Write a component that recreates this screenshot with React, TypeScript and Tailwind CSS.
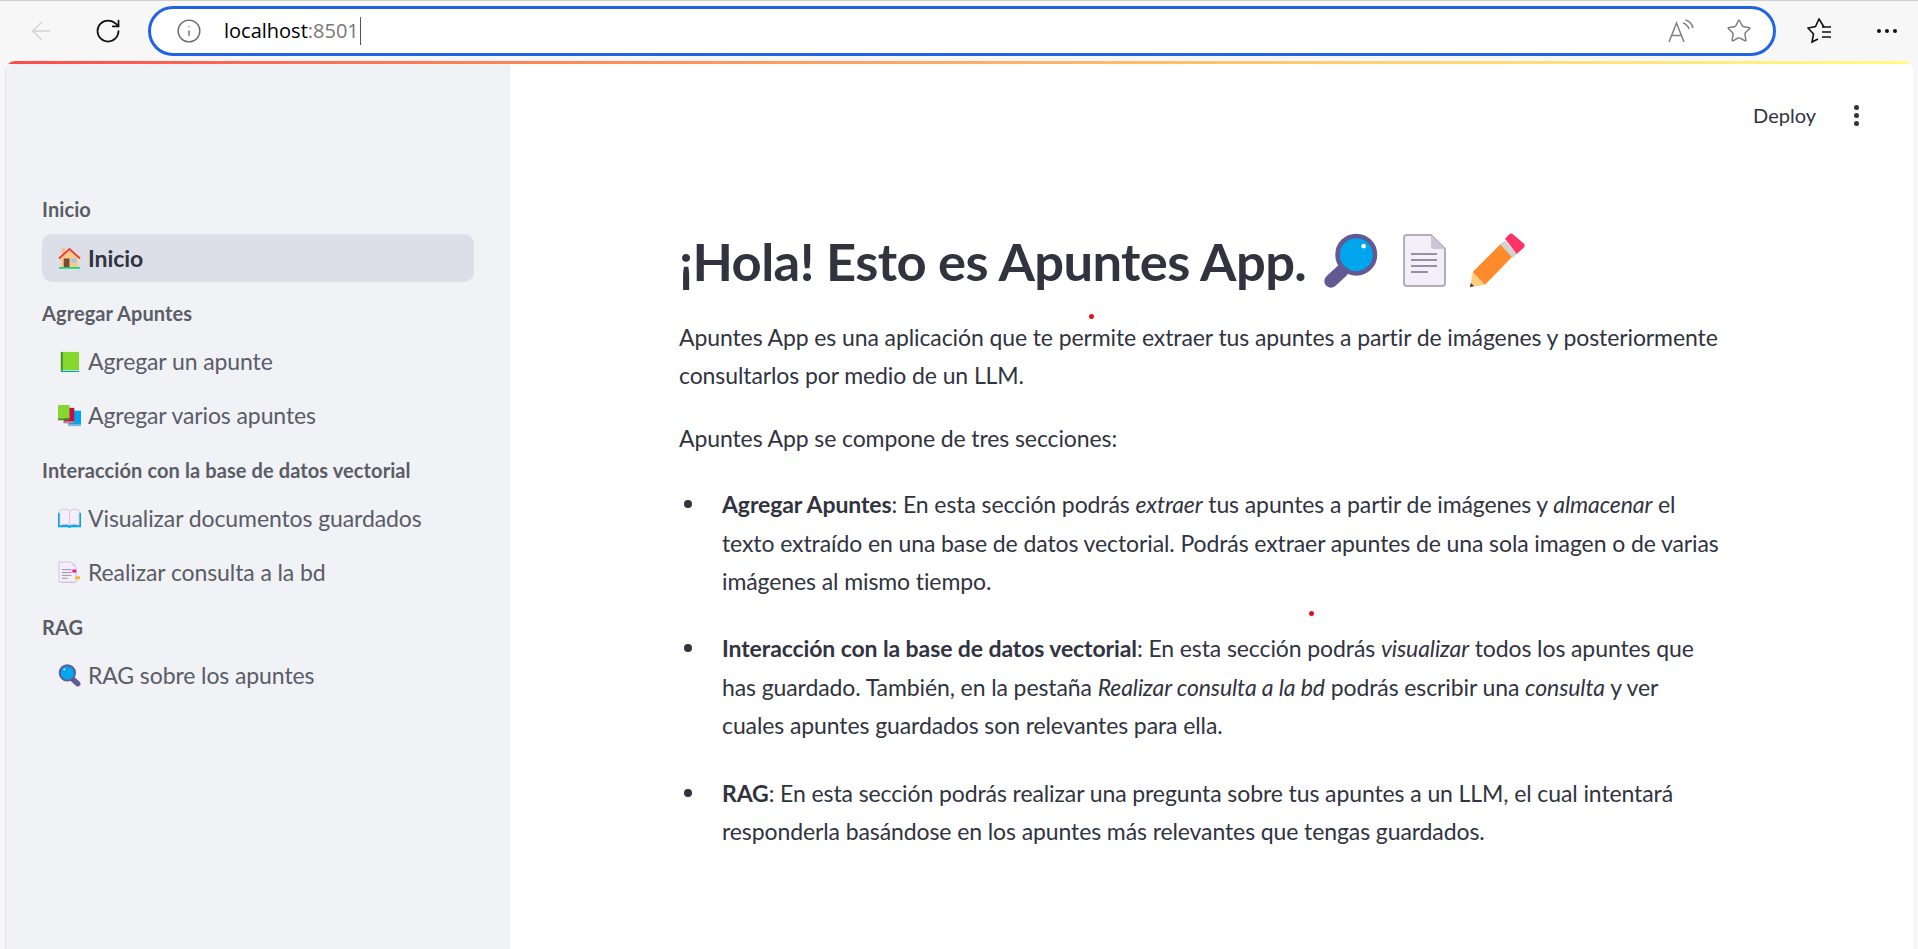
import { ArrowLeft, Info, RotateCw, Star } from "lucide-react";
import type { ReactNode } from "react";

const House = () => (
  <svg viewBox="0 0 24 24" className="w-[23px] h-[23px]">
    <rect x="4" y="1" width="3.5" height="7" fill="#f5c28a" />
    <path d="M3 11 12 3l9 8v10H3z" fill="#f8c98b" />
    <path d="M1 12 12 2l11 10" fill="none" stroke="#f8312f" strokeWidth="1.8" />
    <rect x="6" y="12" width="6" height="9" fill="#7d4533" />
    <rect x="14" y="12" width="5" height="4" fill="#8fcdf5" />
    <rect x="1" y="21" width="22" height="1.6" fill="#00d26a" />
  </svg>
);

const GreenBook = () => (
  <svg viewBox="0 0 24 24" className="w-[23px] h-[23px]">
    <path d="M3 2h19v19H3z" fill="#86d72f" />
    <path d="M3 2h2v19H3z" fill="#44911b" />
    <path d="M3 21h19v2H3z" fill="#00a6a0" />
    <path d="M5 21h17v.8H5z" fill="#e1f5ee" />
  </svg>
);

const Books = () => (
  <svg viewBox="0 0 24 24" className="w-[23px] h-[23px]">
    <path d="M11 7h13v16H11z" fill="#00a6ed" />
    <path d="M11 21h13v2H11z" fill="#7cb9e0" />
    <path d="M6 4h11v16H6z" fill="#ca0b4a" />
    <path d="M6 18h11v2H6z" fill="#b78aa0" />
    <path d="M0 1h12v14H0z" fill="#86d72f" />
    <path d="M0 15h12v2H0z" fill="#44911b" />
  </svg>
);

const OpenBook = () => (
  <svg viewBox="0 0 24 24" className="w-[23px] h-[23px]">
    <path d="M0 6h24v15H14l-2 1-2-1H0z" fill="#00a6ed" />
    <path d="M2 3c4-1 8-1 10 1v15c-2-1-6-1-10 0z" fill="#f3eef8" stroke="#cdc4d6" strokeWidth=".8" />
    <path d="M22 3c-4-1-8-1-10 1v15c2-1 6-1 10 0z" fill="#f3eef8" stroke="#cdc4d6" strokeWidth=".8" />
  </svg>
);

const Notes = () => (
  <svg viewBox="0 0 24 24" className="w-[23px] h-[23px]">
    <path d="M4 3h14v20H4z" fill="#cdc4d6" />
    <path d="M1 1h12l6 6v15H1z" fill="#f3eef8" stroke="#cdc4d6" />
    <path d="M4 9h10M4 12h10M4 15h10M4 18h6" stroke="#998ea4" strokeWidth="1" />
    <rect x="15" y="9" width="4" height="3" fill="#f70a8d" />
    <rect x="18" y="16" width="5" height="3" fill="#ffb02e" />
  </svg>
);

const Magnifier = ({ className }: { className: string }) => (
  <svg viewBox="0 0 32 32" className={className}>
    <path d="M4.5 27.5 11 21.5" stroke="#635994" strokeWidth="7.5" strokeLinecap="round" />
    <circle cx="19" cy="12.4" r="10.7" fill="#00a6ed" stroke="#635994" strokeWidth="2.6" />
    <circle cx="23.2" cy="7.5" r="1.3" fill="#fff" />
  </svg>
);

const Doc = () => (
  <svg viewBox="0 0 43 54" className="w-[43px] h-[54px]">
    <path d="M4 1h24l14 14v34a3 3 0 0 1-3 3H4a3 3 0 0 1-3-3V4a3 3 0 0 1 3-3z" fill="#f3eef8" stroke="#b4acbc" strokeWidth="2" />
    <path d="M28 1v11a3 3 0 0 0 3 3h11z" fill="#cdc4d6" />
    <path d="M8 20h26M8 26h26M8 32h26M8 38h17" stroke="#998ea4" strokeWidth="1.8" />
  </svg>
);

const Pencil = () => (
  <svg viewBox="0 0 56 56" className="w-[56px] h-[56px]">
    <path d="M2.7 39 0 54.3 15 51.7z" fill="#ffce7c" />
    <path d="M.7 50 0 54.3 4 53z" fill="#433b4b" />
    <path d="M2.7 39 31.7 10 43 23 15 51.7z" fill="#ff8a2b" />
    <path d="M30 11 35 7.7 46.7 21 42.7 25z" fill="#d3d3d3" />
    <path d="M35 5.7 39 1.5a3 3 0 0 1 4.2 0l10.5 9a3 3 0 0 1 0 4.2L46.7 21z" fill="#ff3366" />
  </svg>
);

const Label = ({ children }: { children: ReactNode }) => (
  <div className="h-[30px] mt-4 mb-[9px] flex items-center text-[20px] font-bold text-[#5a5c66] tracking-[0.1px]">
    {children}
  </div>
);

const NavItem = ({ icon, text, active }: { icon: ReactNode; text: string; active?: boolean }) => (
  <div
    className={
      active
        ? "h-12 rounded-[10px] bg-[#dcdfe8] flex items-center pl-4 gap-[7px] text-[23px] font-bold text-[#31333f] tracking-[-0.1px]"
        : "h-12 rounded-[10px] flex items-center pl-4 gap-[7px] text-[23px] text-[#5a5c66] tracking-[-0.1px]"
    }
  >
    {icon}
    <span>{text}</span>
  </div>
);

const Sidebar = () => (
  <aside className="w-[505px] shrink-0 bg-[#f0f2f6] px-9 pt-[114px] border-l border-[#e3e3e3]">
    <div className="pb-px">
      <Label>Inicio</Label>
    </div>
    <NavItem active icon={<House />} text="Inicio" />
    <Label>Agregar Apuntes</Label>
    <div className="flex flex-col gap-[6px]">
      <NavItem icon={<GreenBook />} text="Agregar un apunte" />
      <NavItem icon={<Books />} text="Agregar varios apuntes" />
    </div>
    <Label>Interacción con la base de datos vectorial</Label>
    <div className="flex flex-col gap-[6px]">
      <NavItem icon={<OpenBook />} text="Visualizar documentos guardados" />
      <NavItem icon={<Notes />} text="Realizar consulta a la bd" />
    </div>
    <Label>RAG</Label>
    <NavItem icon={<Magnifier className="w-[23px] h-[23px] -scale-x-100" />} text="RAG sobre los apuntes" />
  </aside>
);

const Toolbar = () => (
  <div className="h-[61px] flex items-center border-t border-[#cfcfcf] bg-[#f7f7f7] font-['Open_Sans',sans-serif]">
    <div className="w-[148px] flex shrink-0 items-center pl-[27px] gap-[39px]">
      <ArrowLeft size={28} strokeWidth={1.2} className="text-[#d2d2d2]" />
      <RotateCw size={28} strokeWidth={1.5} className="text-[#111]" />
    </div>
    <div className="h-[50px] flex-1 flex items-center bg-white border-[3px] border-[#2263e5] rounded-[25px] pl-[25px] pr-[21px]">
      <Info size={26} strokeWidth={1.3} className="text-[#6b6b6b]" />
      <div className="ml-[22px] text-[20px] text-black border-r border-[#555] leading-[28px] pr-[1px]">
        localhost<span className="text-[#777]">:8501</span>
      </div>
      <div className="ml-auto flex items-center gap-[32px]">
        <svg viewBox="0 0 26 24" className="w-[26px] h-[24px]" fill="none" stroke="#808080" strokeWidth="1.5">
          <path d="M1 23 8.500 4 16 23M3.700 16.500h9.600" />
          <path d="M15 4c3 1 5 3 6 6M17.500 1c4 1 6.500 4 7.500 8" />
        </svg>
        <Star size={26} strokeWidth={1.3} className="text-[#777]" />
      </div>
    </div>
    <div className="w-[142px] flex shrink-0 items-center pl-[31px] gap-[44px]">
      <svg viewBox="0 0 26 26" className="w-[26px] h-[26px]" fill="none" stroke="#111" strokeWidth="1.6">
        <path d="M17 9 12 1 8.500 8.500 1 10l5.500 6L5 24l6-3" />
        <path d="M15 9h9M15 14h9M15 19h9" />
      </svg>
      <div className="flex gap-[4px]">
        <span className="w-[4px] h-[4px] rounded-full bg-[#111]" />
        <span className="w-[4px] h-[4px] rounded-full bg-[#111]" />
        <span className="w-[4px] h-[4px] rounded-full bg-[#111]" />
      </div>
    </div>
  </div>
);

const Bullet = () => <span className="w-2 h-2 mt-[15px] ml-[5px] mr-[30px] shrink-0 rounded-full bg-[#31333f]" />;

const App = () => {
  return (
    <div className="relative w-[1918px] h-[949px] overflow-hidden bg-[#f7f7f7] font-['Lato',sans-serif]">
      <Toolbar />
      <div className="ml-[5px] mr-[5px] h-[888px] rounded-t-[10px] overflow-hidden flex flex-col bg-white">
        <div className="h-[3px] shrink-0 bg-linear-to-r from-[#ff4b4b] to-[#fffd80]" />
        <div className="flex flex-1">
          <Sidebar />
          <main className="flex-1 text-[#31333f]">
            <div className="h-[102px] flex items-center justify-end pr-[54px] gap-[38px]">
              <span className="text-[20px] text-[#31333f]">Deploy</span>
              <div className="flex flex-col gap-[3px]">
                <span className="w-[5px] h-[5px] rounded-full bg-[#31333f]" />
                <span className="w-[5px] h-[5px] rounded-full bg-[#31333f]" />
                <span className="w-[5px] h-[5px] rounded-full bg-[#31333f]" />
              </div>
            </div>
            <div className="pl-[169px] text-[23px] leading-[38.4px] whitespace-nowrap tracking-[-0.1px]">
              <h1 className="mt-[55px] h-20 flex items-center text-[52.5px] font-bold tracking-[-0.6px]">
                <span>¡Hola! Esto es Apuntes App.</span>
                <span className="ml-[17px] flex items-center gap-6">
                  <Magnifier className="w-[56px] h-[56px]" />
                  <Doc />
                  <Pencil />
                </span>
              </h1>
              <p className="mt-[17px]">
                Apuntes App es una aplicación que te permite extraer tus apuntes a partir de imágenes y posteriormente
                <br />
                consultarlos por medio de un LLM.
              </p>
              <p className="mt-6">Apuntes App se compone de tres secciones:</p>
              <ul className="mt-[28px] flex flex-col gap-[29px]">
                <li className="flex">
                  <Bullet />
                  <div>
                    <b>Agregar Apuntes</b>: En esta sección podrás <i>extraer</i> tus apuntes a partir de imágenes y <i>almacenar</i> el
                    <br />
                    texto extraído en una base de datos vectorial. Podrás extraer apuntes de una sola imagen o de varias
                    <br />
                    imágenes al mismo tiempo.
                  </div>
                </li>
                <li className="flex">
                  <Bullet />
                  <div>
                    <b>Interacción con la base de datos vectorial</b>: En esta sección podrás <i>visualizar</i> todos los apuntes que
                    <br />
                    has guardado. También, en la pestaña <i>Realizar consulta a la bd</i> podrás escribir una <i>consulta</i> y ver
                    <br />
                    cuales apuntes guardados son relevantes para ella.
                  </div>
                </li>
                <li className="flex">
                  <Bullet />
                  <div>
                    <b>RAG</b>: En esta sección podrás realizar una pregunta sobre tus apuntes a un LLM, el cual intentará
                    <br />
                    responderla basándose en los apuntes más relevantes que tengas guardados.
                  </div>
                </li>
              </ul>
            </div>
          </main>
        </div>
      </div>
      <span className="absolute left-[1089px] top-[314px] w-[5px] h-[5px] rounded-full bg-[#e8101c]" />
      <span className="absolute left-[1309px] top-[611px] w-[5px] h-[5px] rounded-full bg-[#e8101c]" />
    </div>
  );
};

export default App;
